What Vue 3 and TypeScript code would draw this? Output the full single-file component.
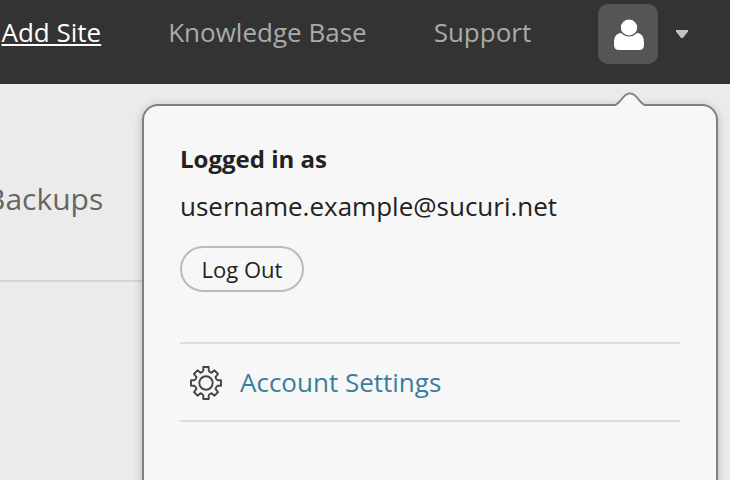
<script setup lang="ts">
const links: { label: string; active: boolean }[] = [
  { label: 'Add Site', active: true },
  { label: 'Knowledge Base', active: false },
  { label: 'Support', active: false },
]
const email = 'username.example@sucuri.net'
</script>

<template>
  <div class="page">
    <header class="topbar">
      <nav class="nav">
        <a v-for="link in links" :key="link.label" class="link" :class="{ active: link.active }">{{ link.label }}</a>
      </nav>
      <button class="avatar" aria-label="Account">
        <svg width="32" height="32" viewBox="0 0 32 32"><path d="M1 24C1 18 3 14.500 8 14Q16 19.500 24 14C29 14.500 31 18 31 24V26Q31 31 26 31H6Q1 31 1 26Z" fill="#fff" /><ellipse cx="16" cy="8.500" rx="8.800" ry="8.500" fill="#fff" stroke="#555" stroke-width="1.200" /></svg>
      </button>
      <svg class="caret" width="12" height="8" viewBox="0 0 12 8"><path d="M0 0H12V1.500L7.300 7.500Q6 8.500 4.700 7.500L0 1.500Z" fill="#c2c2c2" /></svg>
    </header>
    <div class="tabs"><span class="tab">Backups</span></div>
    <section class="menu">
      <svg class="pointer" width="34" height="15" viewBox="0 0 34 15"><path d="M1 15V13.500C6 12 8 7 12 3.500Q17-.8 22 3.500C26 7 28 12 33 13.500V15Z" fill="#f7f7f7" /><path d="M1 13.500C6 12 8 7 12 3.500Q17-.8 22 3.500C26 7 28 12 33 13.500" fill="none" stroke="#808080" stroke-width="1.800" /></svg>
      <strong class="title">Logged in as</strong>
      <span class="email">{{ email }}</span>
      <button class="logout">Log Out</button>
      <a class="settings">
        <svg width="32" height="34" viewBox="0 0 32 34" fill="none" stroke="#444" stroke-width="1.900" stroke-linejoin="round"><path d="M13.300 1H18.700V4.500Q18.700 5.600 21.500 6.800L24.500 4.300L28 8L25.500 11.200Q26.300 13.800 27.500 14.200H31V19.800H27.500Q26.300 20.200 25.500 22.800L28 26L24.500 29.700L21.500 27.200Q18.700 28.400 18.700 29.500V33H13.300V29.500Q13.300 28.400 10.500 27.200L7.500 29.700L4 26L6.500 22.800Q5.700 20.200 4.500 19.800H1V14.200H4.500Q5.700 13.800 6.500 11.200L4 8L7.500 4.300L10.500 6.800Q13.300 5.600 13.300 4.500Z" /><circle cx="16" cy="17" r="6.700" /></svg>
        <span class="label">Account Settings</span>
      </a>
    </section>
  </div>
</template>

<style>
body { margin: 0; }
</style>
<style scoped>
.page { position: relative; width: 730px; height: 480px; overflow: hidden; background: #ebebeb; font-family: "Open Sans", sans-serif; }
.topbar { display: flex; height: 84px; box-sizing: border-box; background: #333; padding-top: 4px; }
.nav { display: flex; gap: 67px; width: 598px; padding-left: 1.5px; box-sizing: border-box; flex: none; }
.link { font-size: 26px; line-height: 56px; color: #aaa; white-space: nowrap; }
.active { color: #fff; text-decoration: underline; text-decoration-thickness: 2px; text-underline-offset: 2px; text-decoration-skip-ink: none; }
.avatar { display: flex; align-items: flex-start; width: 60px; height: 60px; border: 0; padding: 15px 0 0 15px; border-radius: 10px; background: #555; }
.avatar svg { display: block; }
.caret { margin: 26px 0 0 18px; }
.tabs { width: 690px; height: 198px; box-sizing: border-box; border-bottom: 2px solid #d5d5d5; padding-top: 92px; }
.tab { display: block; margin-left: -14px; font-size: 30px; line-height: 46px; color: #666; }
.menu { position: absolute; left: 142px; top: 104px; width: 576px; height: 400px; box-sizing: border-box; border: 2px solid #808080; border-radius: 16px; background: #f7f7f7; box-shadow: 0 2px 10px rgba(0, 0, 0, .22); padding: 33px 36px; display: flex; flex-direction: column; color: #222; }
.pointer { position: absolute; left: 469px; top: -14px; }
.title { font-size: 24px; line-height: 40px; }
.email { font-size: 26px; line-height: 40px; margin-top: 7px; }
.logout { align-self: flex-start; width: 124px; height: 46px; margin-top: 20px; border: 2px solid #bbb; border-radius: 23px; background: #f7f7f7; font: 22px "Open Sans", sans-serif; color: #222; padding: 0; }
.settings { display: flex; align-items: center; height: 80px; box-sizing: border-box; margin-top: 50px; padding-left: 10px; gap: 18px; border-top: 2px solid #ddd; border-bottom: 2px solid #ddd; color: #3a7d9c; font-size: 26px; }
.settings svg { position: relative; top: 1px; left: -.4px; }
</style>
